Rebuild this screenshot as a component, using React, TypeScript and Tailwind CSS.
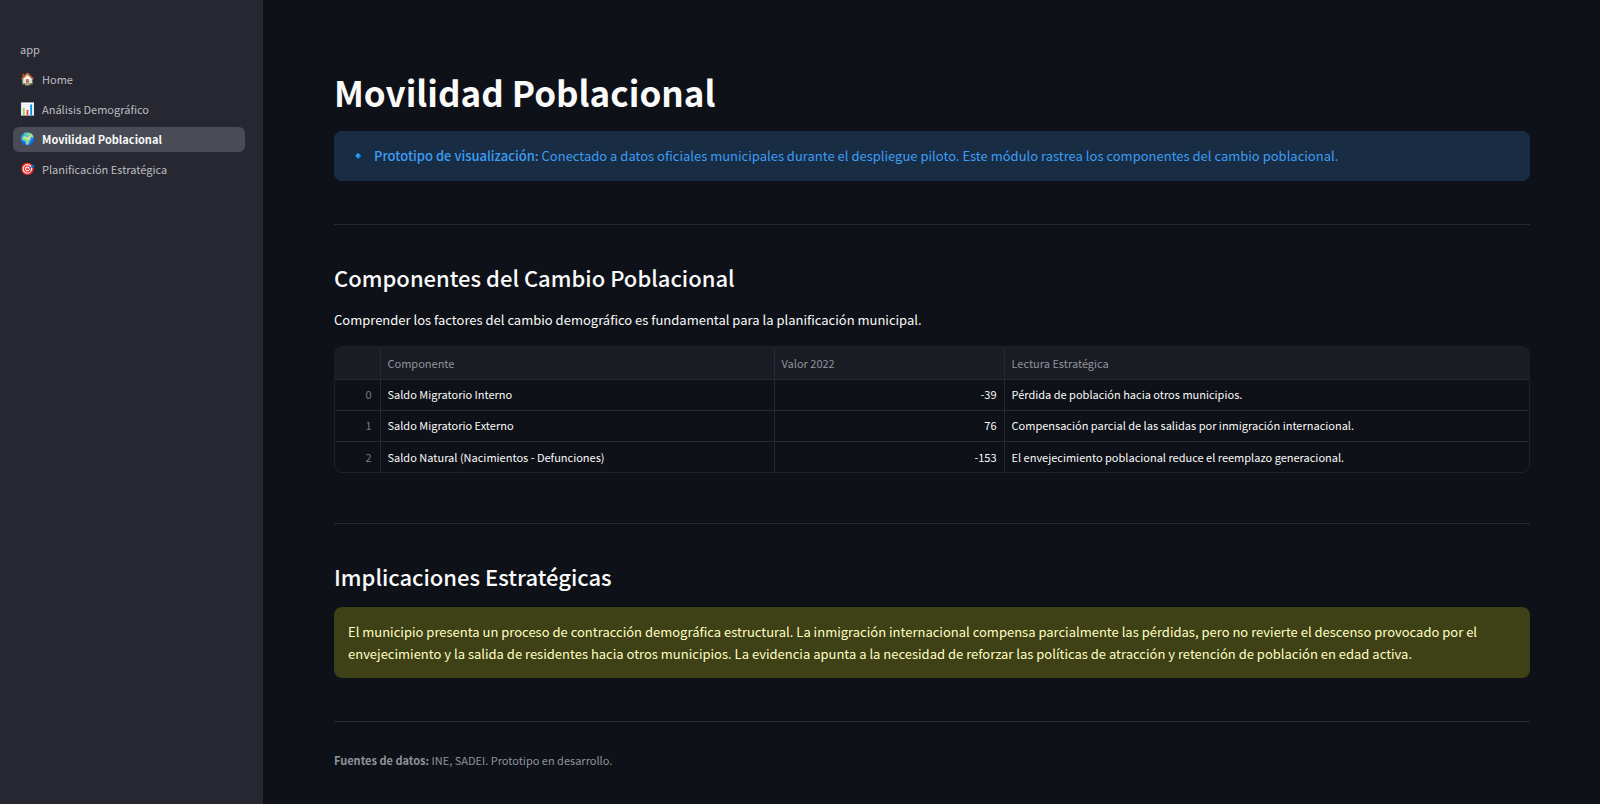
import clsx from 'clsx'

interface Page {
  label: string
  icon?: string
  active?: boolean
}

const PAGES: Page[] = [
  { label: 'app' },
  { label: 'Home', icon: '🏠' },
  { label: 'Análisis Demográfico', icon: '📊' },
  { label: 'Movilidad Poblacional', icon: '🌍', active: true },
  { label: 'Planificación Estratégica', icon: '🎯' },
]

const COMPONENTES = [
  { nombre: 'Saldo Migratorio Interno', valor: -39, lectura: 'Pérdida de población hacia otros municipios.' },
  { nombre: 'Saldo Migratorio Externo', valor: 76, lectura: 'Compensación parcial de las salidas por inmigración internacional.' },
  { nombre: 'Saldo Natural (Nacimientos - Defunciones)', valor: -153, lectura: 'El envejecimiento poblacional reduce el reemplazo generacional.' },
]

function Sidebar() {
  return (
    <aside className="w-[263px] shrink-0 bg-[#262730] pt-[37px] pr-[18px] pl-[13px]">
      <nav className="flex flex-col gap-[5px]">
        {PAGES.map((page) => (
          <a
            key={page.label}
            href="#"
            aria-current={page.active ? 'page' : undefined}
            className={clsx(
              'flex h-[25px] items-center gap-[7px] rounded-md px-[7px] text-[11px]',
              page.active ? 'bg-[#494b55] font-bold text-[#fafafa]' : 'text-[#bcbdc1]',
            )}
          >
            {page.icon && (
              <span className="w-[15px] pb-[2px] font-['Noto_Color_Emoji',sans-serif] text-[12px] leading-none font-normal">
                {page.icon}
              </span>
            )}
            {page.label}
          </a>
        ))}
      </nav>
    </aside>
  )
}

function Divider() {
  return <hr className="mt-[43px] border-t border-[#262931]" />
}

export default function App() {
  return (
    <div className="flex min-h-screen bg-[#0e1117] font-['Noto_Sans_CJK_JP','Noto_Sans',sans-serif] text-[#fafafa]">
      <Sidebar />

      <main className="min-w-0 flex-1 pt-[66px] pr-[70px] pb-8 pl-[71px]">
        <h1 className="text-[35px] leading-[52px] font-bold">Movilidad Poblacional</h1>

        {/* Prototype notice */}
        <div className="mt-[13px] flex h-[50px] items-center rounded-lg bg-[#182c43] px-[15px] text-[13px] text-[#3d9df3]">
          <p>
            <span className="mr-[6px] text-[15px] leading-none">🔹</span>
            <strong className="font-medium">Prototipo de visualización:</strong> Conectado a datos oficiales municipales
            durante el despliegue piloto. Este módulo rastrea los componentes del cambio poblacional.
          </p>
        </div>

        <Divider />

        {/* Components of change */}
        <section className="mt-9">
          <h2 className="text-[22px] leading-8 font-medium">Componentes del Cambio Poblacional</h2>
          <p className="mt-4 text-[13px] leading-[22px]">
            Comprender los factores del cambio demográfico es fundamental para la planificación municipal.
          </p>
          <div className="mt-[15px] mb-[50px] overflow-hidden rounded-lg border border-[#1e2128]">
            <table className="w-full table-fixed border-collapse text-[11px]">
              <colgroup>
                <col className="w-[45px]" />
                <col className="w-[33%]" />
                <col className="w-[230px]" />
                <col />
              </colgroup>
              <thead>
                <tr className="h-8 border-b border-[#262931] bg-[#1a1c24] text-left text-[#91939a]">
                  <th className="border-r border-[#262931]" />
                  <th className="border-r border-[#262931] px-[7px] font-normal">Componente</th>
                  <th className="border-r border-[#262931] px-[7px] font-normal">Valor 2022</th>
                  <th className="px-[7px] font-normal">Lectura Estratégica</th>
                </tr>
              </thead>
              <tbody>
                {COMPONENTES.map((row, i) => (
                  <tr key={row.nombre} className="h-[31px] border-b border-[#262931] last:border-b-0">
                    <td className="border-r border-[#262931] px-2 text-right text-[#777980]">{i}</td>
                    <td className="border-r border-[#262931] px-[7px]">{row.nombre}</td>
                    <td className="border-r border-[#262931] px-[7px] text-right">{row.valor}</td>
                    <td className="px-[7px]">{row.lectura}</td>
                  </tr>
                ))}
              </tbody>
            </table>
          </div>
        </section>

        <Divider />

        {/* Implications */}
        <section className="mt-9">
          <h2 className="text-[22px] leading-8 font-medium">Implicaciones Estratégicas</h2>
          <div className="mt-[15px] rounded-lg bg-[#3e4016] px-[14px] pt-[14px] pb-[13px] text-[13px] leading-[22px] text-[#ffffc2]">
            El municipio presenta un proceso de contracción demográfica estructural. La inmigración internacional
            compensa parcialmente las pérdidas, pero no revierte el descenso provocado por el envejecimiento y la salida
            de residentes hacia otros municipios. La evidencia apunta a la necesidad de reforzar las políticas de
            atracción y retención de población en edad activa.
          </div>
        </section>

        <Divider />

        <p className="mt-7 text-[11px] leading-5 text-[#91939a]">
          <strong className="font-bold">Fuentes de datos:</strong> INE, SADEI. Prototipo en desarrollo.
        </p>
      </main>
    </div>
  )
}
